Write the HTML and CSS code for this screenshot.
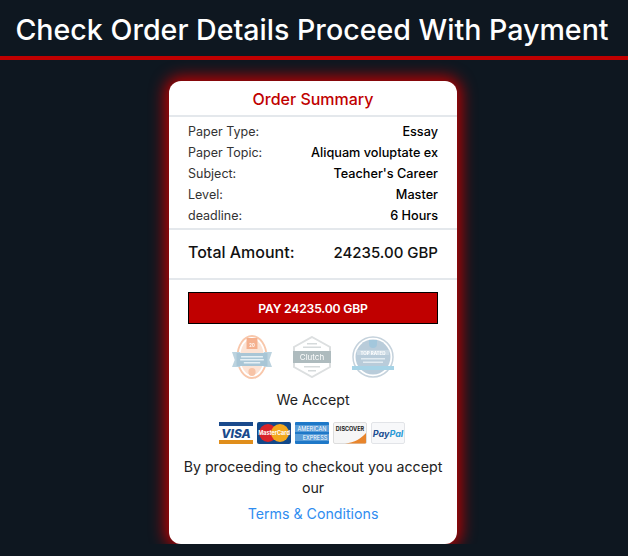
FILE: index.html
```html
<!DOCTYPE html>
<html lang="en">
<head>
    <meta charset="UTF-8">
    <meta name="viewport" content="width=device-width, initial-scale=1.0">
    <title>Order Summary</title>
    <link rel="stylesheet" href="styles.css">
</head>
<body>
    <header class="page-header">
        <h1>Check Order Details Proceed With Payment</h1>
    </header>

    <main class="page-main">
        <section class="card">
            <h2 class="card-title">Order Summary</h2>

            <div class="details">
                <div class="row"><span>Paper Type:</span><strong>Essay</strong></div>
                <div class="row"><span>Paper Topic:</span><strong>Aliquam voluptate ex</strong></div>
                <div class="row"><span>Subject:</span><strong>Teacher's Career</strong></div>
                <div class="row"><span>Level:</span><strong>Master</strong></div>
                <div class="row"><span>deadline:</span><strong>6 Hours</strong></div>
            </div>

            <div class="total">
                <span class="total-label">Total Amount:</span>
                <span>24235.00 GBP</span>
            </div>

            <div class="checkout">
                <button type="button" class="pay-btn">PAY 24235.00 GBP</button>

                <div class="badges">
                    <!-- top 20 badge -->
                    <svg class="badge" width="40" height="44" viewBox="0 0 44 44" preserveAspectRatio="none">
                        <ellipse cx="22" cy="22" rx="16" ry="21" fill="#fff" stroke="#f8c7ab" stroke-width="2"/>
                        <ellipse cx="22" cy="22" rx="13" ry="18" fill="#fce3d5"/>
                        <path d="M0 17h9v15H0l3-7z" fill="#bcd3df"/>
                        <path d="M44 17h-9v15h9l-3-7z" fill="#bcd3df"/>
                        <rect x="16" y="3" width="12" height="11" fill="#f5b08e"/>
                        <text x="22" y="12" class="badge-tiny">20</text>
                        <rect x="5" y="18" width="34" height="13" fill="#a9c6d6"/>
                        <rect x="10" y="21" width="24" height="1.5" fill="#e6f0f5"/>
                        <rect x="9" y="24" width="26" height="1.5" fill="#e6f0f5"/>
                        <rect x="13" y="27" width="18" height="1.5" fill="#e6f0f5"/>
                        <circle cx="22" cy="37" r="4" fill="#f7c3a6"/>
                    </svg>
                    <!-- clutch badge -->
                    <svg class="badge" width="40" height="42" viewBox="0 0 40 42">
                        <path d="M20 1l18 10v20L20 41 2 31V11z" fill="#fff" stroke="#dcdfe0" stroke-width="2"/>
                        <rect x="1" y="15" width="38" height="12" fill="#aebbbe"/>
                        <text x="20" y="24" class="badge-word">Clutch</text>
                        <rect x="15" y="7" width="10" height="1.5" fill="#d5dadb"/>
                        <rect x="11" y="10.5" width="18" height="1.5" fill="#d5dadb"/>
                        <rect x="12" y="30" width="16" height="1.5" fill="#d5dadb"/>
                        <rect x="16" y="34" width="8" height="1.5" fill="#d5dadb"/>
                    </svg>
                    <!-- top rated badge -->
                    <svg class="badge" width="42" height="42" viewBox="0 0 42 42">
                        <circle cx="21" cy="21" r="20" fill="#fff" stroke="#c5d2dc" stroke-width="1.5"/>
                        <circle cx="21" cy="21" r="17.5" fill="#b9ccda"/>
                        <path d="M17 4h8v4a4 4 0 0 1-8 0z" fill="#a3c7dc"/>
                        <rect x="5" y="14" width="32" height="5" fill="#c9d8e3"/>
                        <text x="21" y="18.5" class="badge-tiny">TOP RATED</text>
                        <rect x="9" y="22" width="24" height="1.5" fill="#e2ebf1"/>
                        <rect x="11" y="25.5" width="20" height="1.5" fill="#e2ebf1"/>
                        <rect x="0" y="30" width="42" height="4" fill="#a6d3e6"/>
                    </svg>
                </div>

                <p class="accept">We Accept</p>

                <div class="cards">
                    <svg class="pay-card" width="34" height="22" viewBox="0 0 34 22">
                        <rect width="34" height="22" fill="#fff"/>
                        <rect width="34" height="4" fill="#1a4a8c"/>
                        <rect y="18" width="34" height="4" fill="#e08e1b"/>
                        <text x="17" y="16" class="visa-word">VISA</text>
                    </svg>
                    <svg class="pay-card" width="34" height="22" viewBox="0 0 34 22">
                        <rect width="34" height="22" rx="2" fill="#12498a"/>
                        <circle cx="11" cy="11" r="9" fill="#d8232a"/>
                        <circle cx="23" cy="11" r="9" fill="#f3a81d"/>
                        <text x="17" y="13" class="mc-word">MasterCard</text>
                    </svg>
                    <svg class="pay-card" width="34" height="22" viewBox="0 0 34 22">
                        <rect width="34" height="22" rx="1" fill="#1e78c8"/>
                        <rect y="3" width="34" height="7" fill="#5a9dd8"/>
                        <rect y="12" width="34" height="7" fill="#5a9dd8"/>
                        <text x="17" y="8.5" class="amex-word">AMERICAN</text>
                        <text x="20" y="17.5" class="amex-word">EXPRESS</text>
                    </svg>
                    <svg class="pay-card" width="34" height="22" viewBox="0 0 34 22">
                        <rect x="0.5" y="0.5" width="33" height="21" rx="1.5" fill="#f6f6f6" stroke="#ddd"/>
                        <path d="M33 11v9.5a1 1 0 0 1-1 1H12c10-1 16-5 21-10.5z" fill="#e8852c"/>
                        <text x="17" y="9" class="disc-word">DISCOVER</text>
                    </svg>
                    <svg class="pay-card" width="34" height="22" viewBox="0 0 34 22">
                        <rect x="0.5" y="0.5" width="33" height="21" rx="1.5" fill="#f7f8fa" stroke="#e2e4e8"/>
                        <text x="17" y="15" class="paypal-word">Pay<tspan fill="#2a9ad6">Pal</tspan></text>
                    </svg>
                </div>

                <p class="terms-text">By proceeding to checkout you accept our</p>
                <a class="terms-link" href="#">Terms &amp; Conditions</a>
            </div>
        </section>
    </main>
</body>
</html>
```

FILE: styles.css
```css
body {
    font-family: 'Inter', sans-serif;
    margin: 0;
    padding: 0;
    background-color: #0e1720;
    color: #111;
    overflow: hidden;
}

.page-header {
    height: 53px;
    padding: 3px 4px 0 0;
    border-bottom: 4px solid #c00000;
    display: flex;
    justify-content: center;
    align-items: center;
}

.page-header h1 {
    margin: 0;
    color: #fff;
    font-size: 28.6px;
    font-weight: 500;
    white-space: nowrap;
}

.page-main {
    display: flex;
    justify-content: center;
    padding: 21px 2px 0 0;
}

.card {
    width: 288px;
    height: 463px;
    background-color: #fff;
    border-radius: 12px;
    box-shadow: 0 0 15px 4px #c00000;
}

.card-title {
    margin: 0;
    height: 34px;
    line-height: 36px;
    text-align: center;
    color: #c00000;
    font-size: 16px;
    font-weight: 500;
    border-bottom: 2px solid #e4e8ec;
}

.details {
    padding: 4px 19px 2px;
    border-bottom: 2px solid #e4e8ec;
}

.row {
    display: flex;
    justify-content: space-between;
    height: 21px;
    line-height: 21px;
    font-size: 12.5px;
}

.row span {
    color: #333;
    font-weight: 400;
}

.row strong {
    color: #000;
    font-size: 12.7px;
    font-weight: 500;
}

.total {
    display: flex;
    justify-content: space-between;
    align-items: center;
    height: 44px;
    padding: 0 19px 4px;
    font-size: 15px;
    font-weight: 500;
    color: #111;
    border-bottom: 2px solid #e4e8ec;
}

.total-label {
    font-size: 16px;
}

.checkout {
    padding: 12px 19px 0;
    text-align: center;
}

.pay-btn {
    display: block;
    width: 100%;
    height: 32px;
    background-color: #c00000;
    color: #fff;
    border: 1px solid #000;
    font-family: inherit;
    font-size: 12.2px;
    font-weight: 600;
    letter-spacing: -0.2px;
    cursor: pointer;
}

.badges {
    display: flex;
    justify-content: center;
    align-items: center;
    gap: 20px;
    height: 44px;
    margin-top: 11px;
}

/* the badges are washed out in the original */
.badge {
    filter: blur(0.4px);
}

.badge-word {
    font-size: 8px;
    fill: #fff;
    text-anchor: middle;
}

.badge-tiny {
    font-size: 4.5px;
    font-weight: 700;
    fill: #fff;
    text-anchor: middle;
}

.accept {
    margin: 11px 0 0;
    font-size: 14.2px;
    line-height: 20px;
    color: #222;
}

.cards {
    display: flex;
    justify-content: center;
    gap: 4px;
    margin: 12px 2px 0 0;
}

.visa-word {
    font-size: 12px;
    font-weight: 800;
    font-style: italic;
    fill: #1a4a8c;
    text-anchor: middle;
}

.mc-word {
    font-size: 5.5px;
    font-weight: 700;
    fill: #fff;
    text-anchor: middle;
}

.amex-word {
    font-size: 5.5px;
    fill: #fff;
    text-anchor: middle;
}

.disc-word {
    font-size: 5.5px;
    font-weight: 700;
    fill: #222;
    text-anchor: middle;
}

.paypal-word {
    font-size: 9px;
    font-weight: 700;
    font-style: italic;
    fill: #1c4f93;
    text-anchor: middle;
}

.terms-text {
    margin: 12px -10px 0;
    font-size: 14.2px;
    line-height: 21px;
    color: #222;
}

.terms-link {
    display: block;
    margin-top: 6px;
    font-size: 14.2px;
    line-height: 20px;
    color: #2f8df0;
    text-decoration: none;
}
```
